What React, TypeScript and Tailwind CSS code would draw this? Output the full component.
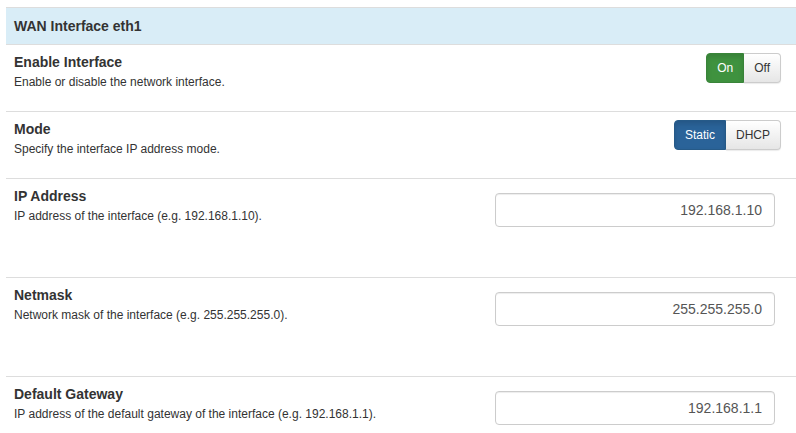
import React from "react";

const font = { fontFamily: '"Liberation Sans", Arial, Helvetica, sans-serif' };

function Row({
  title,
  desc,
  children,
  tall,
  last,
}: {
  title: string;
  desc: string;
  children: React.ReactNode;
  tall?: boolean;
  last?: boolean;
}) {
  return (
    <div
      className={`flex justify-between border-b border-[#dddddd] ${
        tall ? "h-[99px]" : "h-[67px]"
      } ${last ? "border-b-0" : ""}`}
    >
      <div className="pl-[8px] pt-[7px]">
        <div className="text-[14px] leading-[20px] font-bold text-[#333333]">{title}</div>
        <div className="text-[12px] leading-[16px] text-[#333333] mt-[2px]">{desc}</div>
      </div>
      {children}
    </div>
  );
}

function Toggle({ a, b, color }: { a: string; b: string; color: "green" | "blue" }) {
  const active =
    color === "green"
      ? "bg-[#3f923f] border-[#398439]"
      : "bg-[#2a6399] border-[#265a88]";
  return (
    <div className="flex pt-[8px] pr-[15px] h-fit">
      <div
        className={`h-[30px] flex items-center px-[10px] text-[12px] text-white rounded-l-[4px] border ${active}`}
        style={{ boxShadow: "inset 0 3px 5px rgba(0,0,0,0.125)" }}
      >
        {a}
      </div>
      <div className="h-[30px] flex items-center px-[10px] text-[12px] text-[#333333] rounded-r-[4px] border border-l-0 border-[#cccccc] bg-gradient-to-b from-[#ffffff] to-[#e6e6e6] shadow-[0_1px_1px_rgba(0,0,0,0.08)]">
        {b}
      </div>
    </div>
  );
}

function Input({ value }: { value: string }) {
  return (
    <div className="pt-[14px] pr-[21px] h-fit">
      <div className="w-[280px] h-[34px] border border-[#cccccc] rounded-[4px] flex items-center justify-end pr-[12px] text-[14px] text-[#555555] bg-white shadow-[inset_0_1px_1px_rgba(0,0,0,0.075)]">
        {value}
      </div>
    </div>
  );
}

export default function App() {
  return (
    <div className="w-[796px] h-[433px] overflow-hidden bg-white pl-[6px] pt-[7px]" style={font}>
      <div className="border-t border-[#dddddd]">
        <div className="h-[37px] bg-[#d9edf7] border-b border-[#dddddd] flex items-center pl-[8px] text-[14px] font-bold text-[#333333]">
          WAN Interface eth1
        </div>
        <Row title="Enable Interface" desc="Enable or disable the network interface.">
          <Toggle a="On" b="Off" color="green" />
        </Row>
        <Row title="Mode" desc="Specify the interface IP address mode.">
          <Toggle a="Static" b="DHCP" color="blue" />
        </Row>
        <Row tall title="IP Address" desc="IP address of the interface (e.g. 192.168.1.10).">
          <Input value="192.168.1.10" />
        </Row>
        <Row tall title="Netmask" desc="Network mask of the interface (e.g. 255.255.255.0).">
          <Input value="255.255.255.0" />
        </Row>
        <Row tall last title="Default Gateway" desc="IP address of the default gateway of the interface (e.g. 192.168.1.1).">
          <Input value="192.168.1.1" />
        </Row>
      </div>
    </div>
  );
}
